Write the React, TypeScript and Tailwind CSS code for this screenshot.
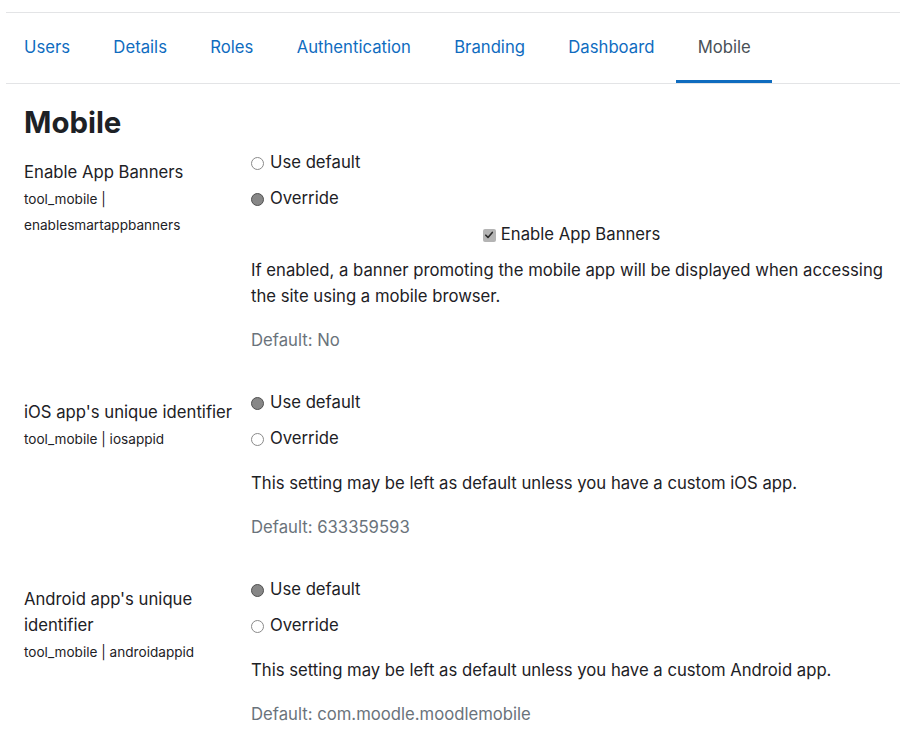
import React from "react"

const tabs = ["Users", "Details", "Roles", "Authentication", "Branding", "Dashboard", "Mobile"]

const Radio = ({ checked, label }: { checked?: boolean; label: string }) => (
    <div className="h-9 flex items-center">
        {checked ? (
            <span className="w-[13px] h-[13px] rounded-full border-[1.5px] border-[#505050] bg-[#878787] box-border" />
        ) : (
            <span className="w-[13px] h-[13px] rounded-full border border-[#8a8a8a] bg-white box-border" />
        )}
        <span className="ml-[6px]">{label}</span>
    </div>
)

type SettingProps = {
    title: string[]
    name: string
    useDefault: boolean
    extra?: React.ReactNode
    desc: string[]
    def: string
    descGap: string
}

const Setting = ({ title, name, useDefault, extra, desc, def, descGap }: SettingProps) => (
    <div className="flex">
        <div className="w-[227px] shrink-0 pt-[14px]">
            {title.map((t, i) => (
                <div key={i} className="leading-[26px]">{t}</div>
            ))}
            {name.split("\n").map((n, i) => (
                <div key={i} className={`text-[13.6px] leading-[26px] ${i === 0 ? "mt-px" : ""}`}>{n}</div>
            ))}
        </div>
        <div className="flex-1 pr-2">
            <Radio checked={useDefault} label="Use default" />
            <Radio checked={!useDefault} label="Override" />
            {extra}
            <div className={descGap}>
                {desc.map((d, i) => (
                    <div key={i} className="leading-[26px] whitespace-nowrap">{d}</div>
                ))}
            </div>
            <div className="mt-[18px] leading-[26px] text-[#6a737b]">{def}</div>
        </div>
    </div>
)

export default function App() {
    return (
        <div className="w-[900px] h-[754px] overflow-hidden bg-white text-[#1d2125] text-[16.7px] font-['Inter',sans-serif]">
            <div className="pt-3 ml-[6px]">
                <div className="border-t border-b border-[#e3e4e6] flex">
                    <div className="flex -ml-[3.67px]">
                        {tabs.map((t) => (
                            <div key={t} className="relative h-[70px] px-[21.67px] flex items-center">
                                <span className={t === "Mobile" ? "text-[#495057]" : "text-[#0f6cbf]"}>{t}</span>
                                {t === "Mobile" && (
                                    <div className="absolute left-0 right-0 bottom-0 h-[3px] bg-[#0f6cbf]" />
                                )}
                            </div>
                        ))}
                    </div>
                </div>
            </div>

            <div className="pl-6">
                <h2 className="mt-[21px] text-[29.4px] leading-[36px] font-bold">Mobile</h2>

                <div className="mt-1">
                    <Setting
                        title={["Enable App Banners"]}
                        name={"tool_mobile |\nenablesmartappbanners"}
                        useDefault={false}
                        extra={
                            <div className="h-9 flex items-center justify-center">
                                <span className="w-[13px] h-[13px] rounded-[2px] bg-[#b4b4b4] flex items-center justify-center">
                                    <svg width="10" height="10" viewBox="0 0 10 10">
                                        <path d="M1.8 5.2 L4 7.4 L8.3 2.4" fill="none" stroke="#2a2a2a" strokeWidth="1.6" strokeLinecap="round" strokeLinejoin="round" />
                                    </svg>
                                </span>
                                <span className="ml-[5px]">Enable App Banners</span>
                            </div>
                        }
                        desc={[
                            "If enabled, a banner promoting the mobile app will be displayed when accessing",
                            "the site using a mobile browser.",
                        ]}
                        def="Default: No"
                        descGap="mt-[4px]"
                    />
                </div>

                <div className="mt-8">
                    <Setting
                        title={["iOS app's unique identifier"]}
                        name="tool_mobile | iosappid"
                        useDefault={true}
                        desc={["This setting may be left as default unless you have a custom iOS app."]}
                        def="Default: 633359593"
                        descGap="mt-[13px]"
                    />
                </div>

                <div className="mt-8">
                    <Setting
                        title={["Android app's unique", "identifier"]}
                        name="tool_mobile | androidappid"
                        useDefault={true}
                        desc={["This setting may be left as default unless you have a custom Android app."]}
                        def="Default: com.moodle.moodlemobile"
                        descGap="mt-[13px]"
                    />
                </div>
            </div>
        </div>
    )
}
